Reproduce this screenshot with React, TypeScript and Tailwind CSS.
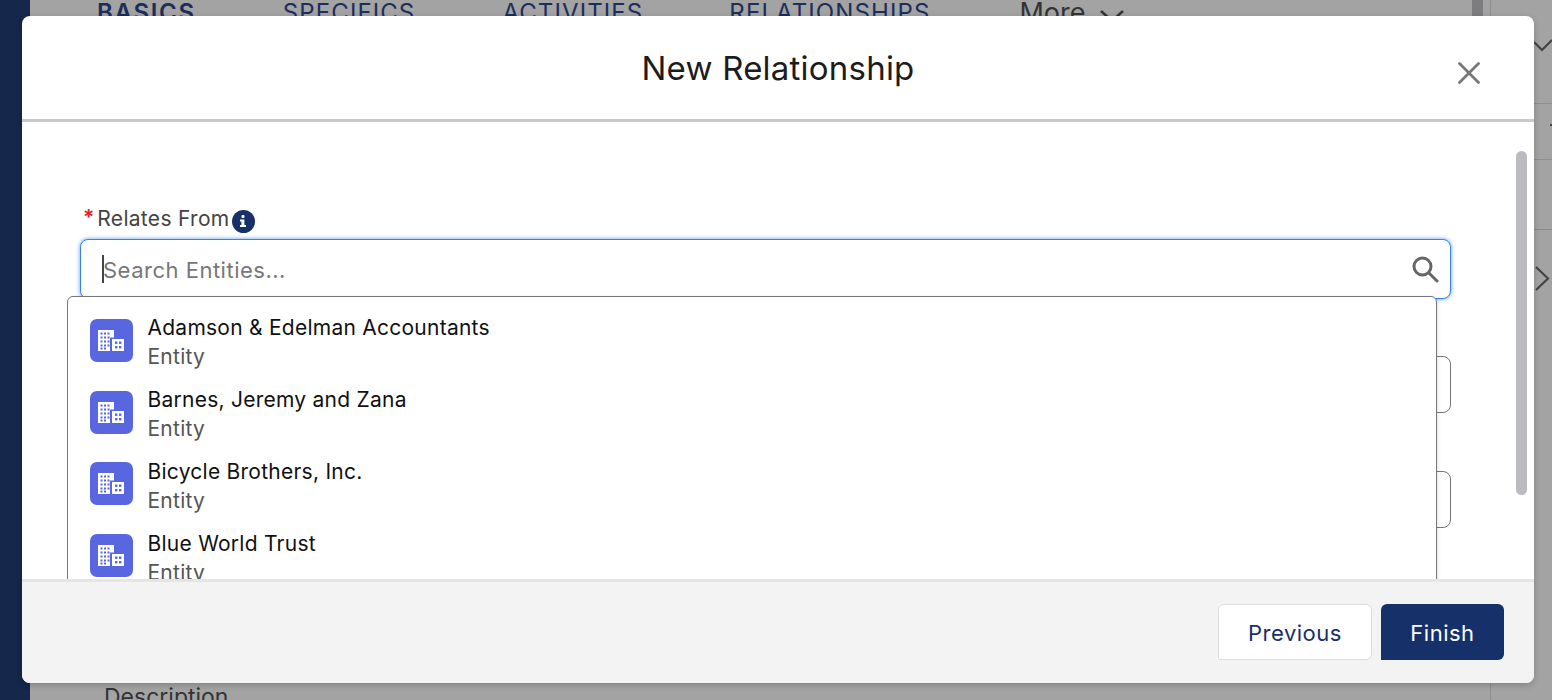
import React from "react";

const font = { fontFamily: "Inter, 'Liberation Sans', sans-serif" };

function EntityIcon({ lifted }: { lifted?: boolean }) {
  return (
    <div className={lifted ? "w-[43px] h-[43px] -mt-[1px] rounded-[7px] bg-[#5867e0] flex items-center justify-center shrink-0" : "w-[43px] h-[43px] rounded-[7px] bg-[#5867e0] flex items-center justify-center shrink-0"}>
      <svg width="27" height="24" viewBox="0 0 27 24">
        <path fill="#fff" fillRule="evenodd" d="M0 1h16v7.5h-4V22H0z" />
        <path fill="#fff" d="M14 10h12v12H14z" />
        <g fill="#5867e0">
          {[3.5, 7.5, 11.5, 15.500].map((y) => [2.5, 6, 9.5].map((x) => <rect key={`${x}-${y}`} x={x} y={y} width="2" height="2" />))}
          <rect x="2.5" y="18.5" width="2" height="2" />
          <rect x="6" y="18.5" width="2" height="2" />
          {[12.5, 17].map((y) => [17, 21].map((x) => <rect key={`b${x}-${y}`} x={x} y={y} width="2.4" height="2.4" />))}
        </g>
      </svg>
    </div>
  );
}

function Item({ name, lifted }: { name: string; lifted?: boolean }) {
  return (
    <div className="h-[72px] flex gap-[14.5px] pl-[22px] pt-[22px] shrink-0">
      <EntityIcon lifted={lifted} />
      <div className="-mt-[6px]">
        <div className="text-[21px] leading-[29px] text-[#111] tracking-[0.25px]">{name}</div>
        <div className="text-[21px] leading-[29px] text-[#555] tracking-[0.25px]">Entity</div>
      </div>
    </div>
  );
}

function Field() {
  return <div className="h-[57px] border border-[#777] rounded-[8px] bg-white" />;
}

export default function App() {
  return (
    <div className="relative w-[1552px] h-[700px] overflow-hidden flex bg-[#a3a3a3]" style={font}>
      <div className="w-[30px] bg-[#15274a] shrink-0" />
      <div className="flex-1 flex flex-col">
        <div className="flex items-start h-[16px] pl-[67px] text-[24px] leading-[24px] tracking-[1.1px] text-[#1b2e5c] pt-[1px]">
          <span className="font-semibold tracking-[1.7px]">BASICS</span>
          <span className="ml-[87px]">SPECIFICS</span>
          <span className="ml-[87px]">ACTIVITIES</span>
          <span className="ml-[86px]">RELATIONSHIPS</span>
          <span className="ml-[89px] text-[27px] text-[#333] tracking-normal">More</span>
          <svg className="ml-[14px] mt-[8px]" width="26" height="14" viewBox="0 0 26 14" fill="none" stroke="#333" strokeWidth="2.4">
            <path d="M2 2l11 10L24 2" />
          </svg>
        </div>
        <div className="flex-1" />
        <div className="pl-[74px] h-[17px] text-[23px] leading-[28px] text-[#333]">Description</div>
      </div>

      {/* right side of the page behind the dialog */}
      <div className="absolute top-0 right-0 w-[62px] h-full border-l border-[#8f8f8f] flex flex-col">
        <div className="h-[104px] border-b border-[#8f8f8f]" />
        <div className="h-[56px] border-b border-[#8f8f8f]" />
        <div className="h-[70px] border-b border-[#7f8aa0]" />
      </div>
      <div className="absolute top-0 left-[1472px] w-[11px] h-[16px] bg-[#7d7d80]" />
      <svg className="absolute left-[1534px] top-[36px]" width="18" height="18" viewBox="0 0 18 18" fill="none" stroke="#444" strokeWidth="2.2">
        <path d="M0 6l8 8 10-10" />
      </svg>
      <svg className="absolute left-[1534px] top-[264px]" width="18" height="30" viewBox="0 0 18 30" fill="none" stroke="#444" strokeWidth="2.2">
        <path d="M2 3l12 11.5L2 26" />
      </svg>
      <div className="absolute left-[1550px] top-[124px] w-[2px] h-[1.5px] bg-[#444]" />

      {/* dialog */}
      <div className="absolute left-[22px] top-[16px] w-[1512px] h-[667px] rounded-[8px] bg-white flex flex-col overflow-hidden shadow-[0_2px_6px_rgba(0,0,0,0.2)]">
        <div className="relative h-[106px] shrink-0 border-b-[3px] border-[#c9c9c9] flex justify-center pt-[29px]">
          <h1 className="text-[33px] leading-[46px] text-[#1c1c1c] tracking-[0.22px]">New Relationship</h1>
          <svg className="absolute left-[1436px] top-[46px]" width="22" height="22" viewBox="0 0 22 22" stroke="#777" strokeWidth="2.8" strokeLinecap="round">
            <path d="M1.5 1.5l19 19M20.5 1.5l-19 19" />
          </svg>
        </div>

        <div className="relative flex-1 min-h-0 overflow-hidden pl-[58px] pr-[83px] pt-[84px]">
          <div className="flex items-center h-[24px] ml-[3px]">
            <span className="text-[#e52222] text-[21px] font-semibold leading-[24px] mr-[3px]">*</span>
            <span className="text-[21px] leading-[24px] pt-[1px] text-[#444] tracking-[0.3px]">Relates From</span>
            <span className="w-[23px] h-[23px] rounded-full bg-[#16306a] ml-[2px] mt-[6px] flex items-center justify-center">
              <svg width="8" height="12" viewBox="0 0 8 12" fill="#fff">
                <rect x="2.5" y="0" width="3" height="3" rx="1" />
                <path d="M1 4.5h4.4V10H7v2H1v-2h1.4V6.500H1z" />
              </svg>
            </span>
          </div>
          <div className="mt-[9px] h-[60px] rounded-[8px] border border-[#3b82e8] shadow-[0_0_4px_#5b9cf0] bg-white flex items-center pl-[21px] pr-[11px] relative">
            <span className="w-[2px] h-[28px] bg-[#444] mr-[-1px]" />
            <span className="text-[22px] leading-[30px] pt-[2px] text-[#777] tracking-[0.5px]">Search Entities...</span>
            <svg className="ml-auto" width="28" height="28" viewBox="0 0 28 28" fill="none" stroke="#666" strokeWidth="3">
              <circle cx="11.500" cy="11.500" r="8.500" />
              <path d="M18 18l8 8" strokeLinecap="round" />
            </svg>
          </div>
          <div className="mt-[57px]"><Field /></div>
          <div className="mt-[58px]"><Field /></div>

          {/* lookup menu */}
          <div className="absolute left-[45px] top-[174px] w-[1370px] h-[300px] border border-[#777] rounded-t-[6px] bg-white shadow-[2px_0_3px_rgba(0,0,0,0.08)] flex flex-col">
            <Item name="Adamson & Edelman Accountants" />
            <Item name="Barnes, Jeremy and Zana" />
            <Item name="Bicycle Brothers, Inc." lifted />
            <Item name="Blue World Trust" lifted />
          </div>

          <div className="absolute left-[1494px] top-[29px] w-[11px] h-[344px] rounded-full bg-[#bbbbc0]" />
        </div>

        <div className="h-[104px] shrink-0 bg-[#f3f3f3] border-t-[3px] border-[#e5e5e5] flex justify-end items-start gap-[9px] pt-[22px] pr-[30px]">
          <button className="w-[154px] h-[56px] pt-[2px] rounded-[6px] rounded-bl-[2px] border border-[#dcdcdc] bg-white text-[22px] text-[#16306a] tracking-[0.5px]">Previous</button>
          <button className="w-[123px] h-[56px] pt-[2px] rounded-[6px] rounded-bl-none bg-[#16306a] text-[22px] text-white tracking-[0.5px]">Finish</button>
        </div>
      </div>
    </div>
  );
}
